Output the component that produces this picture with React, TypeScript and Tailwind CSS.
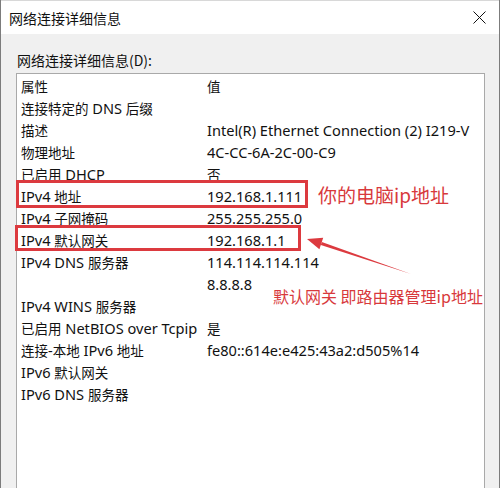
import React from 'react'

const ROWS: [string, string][] = [
  ['属性', '值'],
  ['连接特定的 DNS 后缀', ''],
  ['描述', 'Intel(R) Ethernet Connection (2) I219-V'],
  ['物理地址', '4C-CC-6A-2C-00-C9'],
  ['已启用 DHCP', '否'],
  ['IPv4 地址', '192.168.1.111'],
  ['IPv4 子网掩码', '255.255.255.0'],
  ['IPv4 默认网关', '192.168.1.1'],
  ['IPv4 DNS 服务器', '114.114.114.114'],
  ['', '8.8.8.8'],
  ['IPv4 WINS 服务器', ''],
  ['已启用 NetBIOS over Tcpip', '是'],
  ['连接-本地 IPv6 地址', 'fe80::614e:e425:43a2:d505%14'],
  ['IPv6 默认网关', ''],
  ['IPv6 DNS 服务器', ''],
]

// Latin runs render a bit wider than the CJK runs in the original
function Mixed({ text }: { text: string }) {
  const parts = text.split(/([\u4e00-\u9fff]+)/).filter(Boolean)
  return (
    <>
      {parts.map((p, i) =>
        /[\u4e00-\u9fff]/.test(p) ? (
          <span key={i} className="text-[13.5px]" style={{ fontFamily: '"Noto Sans CJK SC", sans-serif' }}>{p}</span>
        ) : (
          <span key={i} className="text-[14.6px]" style={{ fontFamily: '"Noto Sans", sans-serif' }}>{p}</span>
        )
      )}
    </>
  )
}

export default function App() {
  return (
    <div
      className="relative w-[500px] h-[488px] overflow-hidden flex flex-col border-x border-[#7c7c7c] bg-[#f0f0f0] text-[#111]"
      style={{ fontFamily: '"Noto Sans CJK SC", "Noto Sans", sans-serif' }}
    >
      {/* Title bar */}
      <div className="h-[34px] bg-white border-t border-[#d8d8d8] flex items-center justify-between pl-2 pr-[13px] shrink-0">
        <span className="text-[14px] leading-none">网络连接详细信息</span>
        <svg width="13" height="13" viewBox="0 0 13 13" className="shrink-0">
          <path d="M0.5 0.5 L12.5 12.5 M12.5 0.5 L0.5 12.5" stroke="#111" strokeWidth="1" />
        </svg>
      </div>

      {/* Body */}
      <div className="flex-1 flex flex-col pl-[15px] pr-[14px] pt-[16px]">
        <div className="text-[14px] leading-[20px] pl-px">网络连接详细信息(D):</div>
        <div className="mt-[3px] flex-1 bg-white border-x border-t border-[#a9a9a9] pl-[4px]">
          {ROWS.map(([k, v], i) => (
            <div key={i} className="h-[22px] flex items-center leading-[22px] whitespace-nowrap">
              <span className="w-[186px] shrink-0"><Mixed text={k} /></span>
              <span><Mixed text={v} /></span>
            </div>
          ))}
        </div>
      </div>

      {/* Annotations */}
      <div className="absolute left-[15px] top-[180px] w-[292px] h-[28px] border-[3px] border-[#dc3a3f]" />
      <div className="absolute left-[14px] top-[225px] w-[286px] h-[26px] border-[3px] border-[#dc3a3f]" />
      <div className="absolute left-[317px] top-[182px] text-[19px] leading-[26px] text-[#d8393c] whitespace-nowrap">
        你的电脑ip地址
      </div>
      <div className="absolute left-[272px] top-[285px] text-[16px] leading-[22px] text-[#d8393c] whitespace-nowrap">
        默认网关 即路由器管理ip地址
      </div>
      <svg className="absolute left-0 top-0 pointer-events-none" width="500" height="488" viewBox="0 0 500 488">
        <polygon points="320.8,242.1 410,274 319.8,244.9" fill="#dc3a3f" />
        <polygon points="306,239 322.2,237.8 318.4,249.2" fill="#dc3a3f" />
      </svg>
    </div>
  )
}
